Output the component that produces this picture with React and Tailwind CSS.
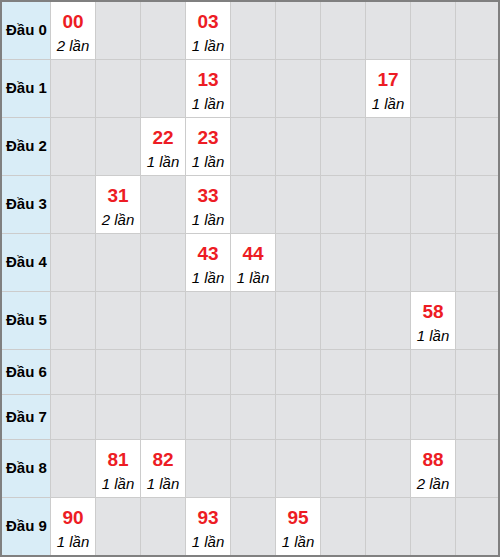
import React from 'react';

const hits = {
  0: { 0: 2, 3: 1 },
  1: { 3: 1, 7: 1 },
  2: { 2: 1, 3: 1 },
  3: { 1: 2, 3: 1 },
  4: { 3: 1, 4: 1 },
  5: { 8: 1 },
  6: {},
  7: {},
  8: { 1: 1, 2: 1, 8: 2 },
  9: { 0: 1, 3: 1, 5: 1 },
};

const digits = [0, 1, 2, 3, 4, 5, 6, 7, 8, 9];

const Row = ({ head }) => {
  const row = hits[head];
  const tall = Object.keys(row).length > 0;
  return (
    <div
      className={`grid grid-cols-[48px_repeat(9,44px)_42px] gap-px ${tall ? 'h-[57px]' : 'h-[44px]'}`}
    >
      <div className="flex items-center bg-[#d9edf7] pl-[4px] text-[15px] font-bold text-black">
        Đầu {head}
      </div>
      {digits.map((tail) =>
        row[tail] ? (
          <div key={tail} className="flex flex-col items-center bg-white pt-[8px]">
            <span className="text-[19px] leading-[24px] font-bold text-[#ed1c24]">
              {head}
              {tail}
            </span>
            <span className="text-[15px] leading-[24px] italic text-black">{row[tail]} lần</span>
          </div>
        ) : (
          <div key={tail} className="bg-[#e2e3e5]" />
        )
      )}
    </div>
  );
};

export default function App() {
  return (
    <div className="w-[500px] h-[557px] border-2 border-[#808080] bg-[#cccccc] flex flex-col gap-px font-['Liberation_Sans',Arial,sans-serif]">
      {digits.map((head) => (
        <Row key={head} head={head} />
      ))}
    </div>
  );
}
